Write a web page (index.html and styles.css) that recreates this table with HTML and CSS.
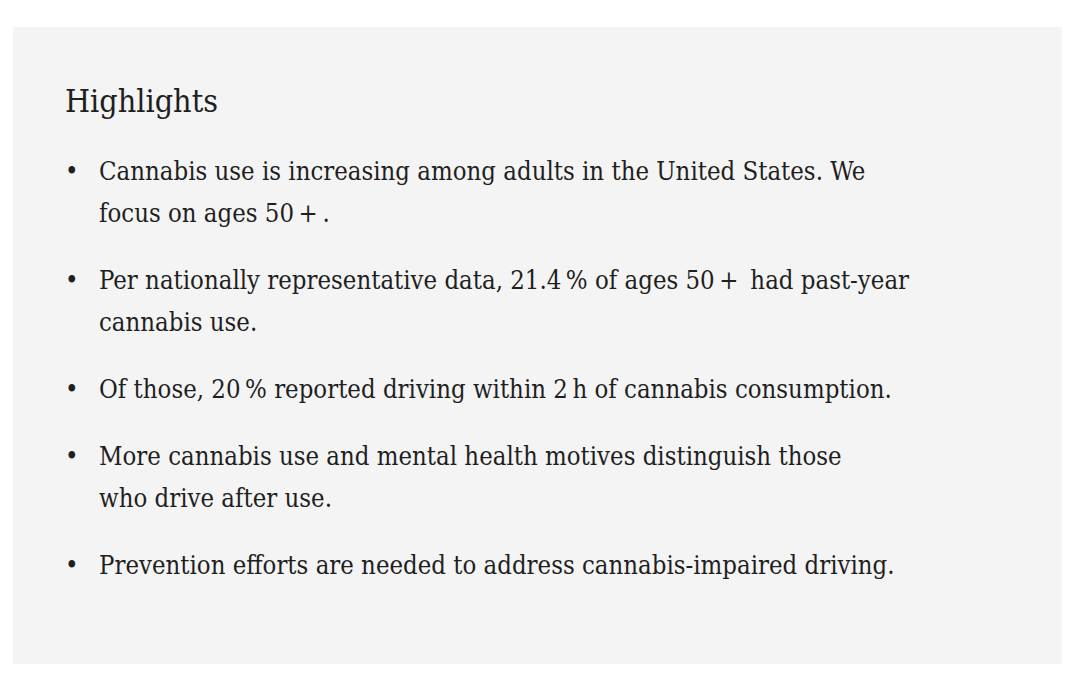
FILE: index.html
```html
<!DOCTYPE html>
<html lang="en">
<head>
<meta charset="utf-8">
<link rel="stylesheet" href="styles.css">
</head>
<body>
<section class="highlights">
  <h2 class="title">Highlights</h2>
  <ul class="list">
    <li class="item">Cannabis use is increasing among adults in the United States. We<br>focus on ages 50&#8201;+&#8201;.</li>
    <li class="item">Per nationally representative data, 21.4&#8201;% of ages 50&#8201;+&#8201; had past-year<br>cannabis use.</li>
    <li class="item">Of those, 20&#8201;% reported driving within 2&#8201;h of cannabis consumption.</li>
    <li class="item">More cannabis use and mental health motives distinguish those<br>who drive after use.</li>
    <li class="item">Prevention efforts are needed to address cannabis-impaired driving.</li>
  </ul>
</section>
</body>
</html>
```
FILE: styles.css
```css
html, body {
  margin: 0;
  padding: 0;
  background: #ffffff;
}
body {
  padding: 27px 24px 35px 13px;
  font-family: "DejaVu Serif Condensed", "DejaVu Serif", serif;
  font-stretch: condensed;
  color: #1f1f1f;
}
.highlights {
  background: #f4f4f4;
  height: 637px;
  box-sizing: border-box;
  padding: 52px 52px 0 52px;
}
.title {
  margin: 0 0 27px 0;
  font-weight: normal;
  font-size: 32px;
  line-height: 44px;
}
.list {
  list-style: none;
  margin: 0;
  padding: 0;
}
.item {
  position: relative;
  padding-left: 34px;
  font-size: 25.5px;
  line-height: 42px;
  margin-bottom: 25px;
  white-space: nowrap;
}
.item::before {
  content: "\2022";
  position: absolute;
  left: 0;
  top: 0;
}
```
